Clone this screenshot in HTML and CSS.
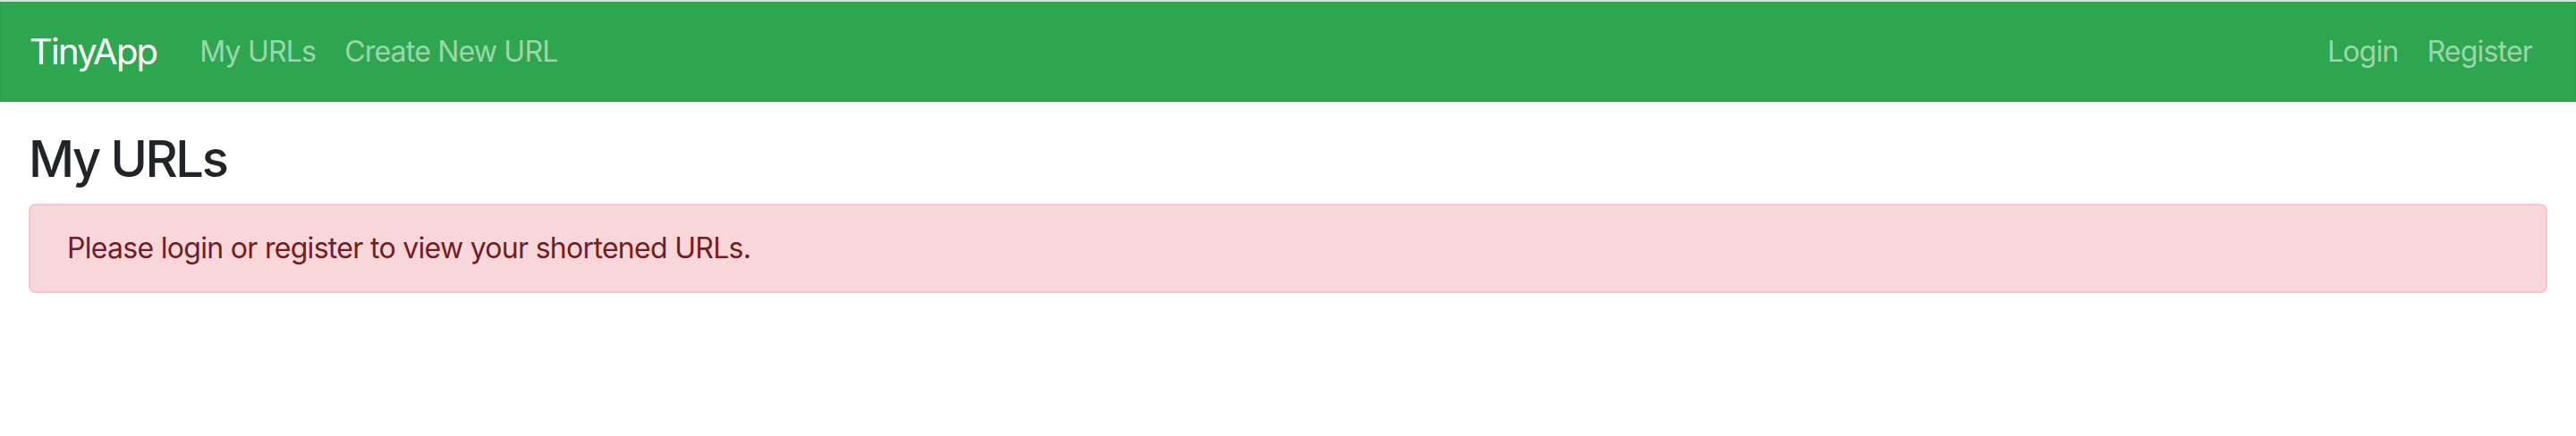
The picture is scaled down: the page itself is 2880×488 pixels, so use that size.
FILE: index.html
```html
<!DOCTYPE html>
<html lang="en">
<head>
<meta charset="utf-8">
<title>TinyApp</title>
<link rel="stylesheet" href="styles.css">
</head>
<body>
<div class="topline"></div>
<nav class="navbar">
  <div class="nav-left">
    <a class="brand" href="#">TinyApp</a>
    <a class="nav-link" href="#">My URLs</a>
    <a class="nav-link" href="#">Create New URL</a>
  </div>
  <div class="nav-right">
    <a class="nav-link" href="#">Login</a>
    <a class="nav-link" href="#">Register</a>
  </div>
</nav>
<main class="content">
  <h3 class="title">My URLs</h3>
  <div class="alert">Please login or register to view your shortened URLs.</div>
</main>
</body>
</html>
```
FILE: styles.css
```css
html, body {
  margin: 0;
  padding: 0;
  background: #fff;
}
body {
  font-family: Inter, "Noto Sans", "Liberation Sans", sans-serif;
  color: #212529;
}
.topline {
  height: 2px;
  background: #dcdcdc;
}
.navbar {
  height: 112px;
  box-sizing: border-box;
  background: #2da64f;
  border-left: 1px solid #2a9e4b;
  border-right: 1px solid #2a9e4b;
  display: flex;
  align-items: center;
  justify-content: space-between;
  padding: 0 32px;
}
.nav-left, .nav-right {
  display: flex;
  align-items: center;
}
.brand {
  color: #fff;
  text-decoration: none;
  font-size: 40px;
  line-height: 60px;
  margin-right: 32px;
  letter-spacing: -1.8px;
}
.nav-link {
  color: rgba(255, 255, 255, 0.55);
  text-decoration: none;
  font-size: 32px;
  line-height: 48px;
  padding: 0 16px;
  letter-spacing: -0.8px;
}
.content {
  padding: 0 32px;
}
.title {
  margin: 31px 0 16px;
  font-size: 56px;
  font-weight: 500;
  line-height: 67px;
  letter-spacing: -2.4px;
}
.alert {
  background: #f8d7da;
  border: 2px solid #f5c6cb;
  border-radius: 8px;
  color: #721c24;
  font-size: 32px;
  line-height: 48px;
  padding: 24px 41px;
  letter-spacing: -0.7px;
}
```
